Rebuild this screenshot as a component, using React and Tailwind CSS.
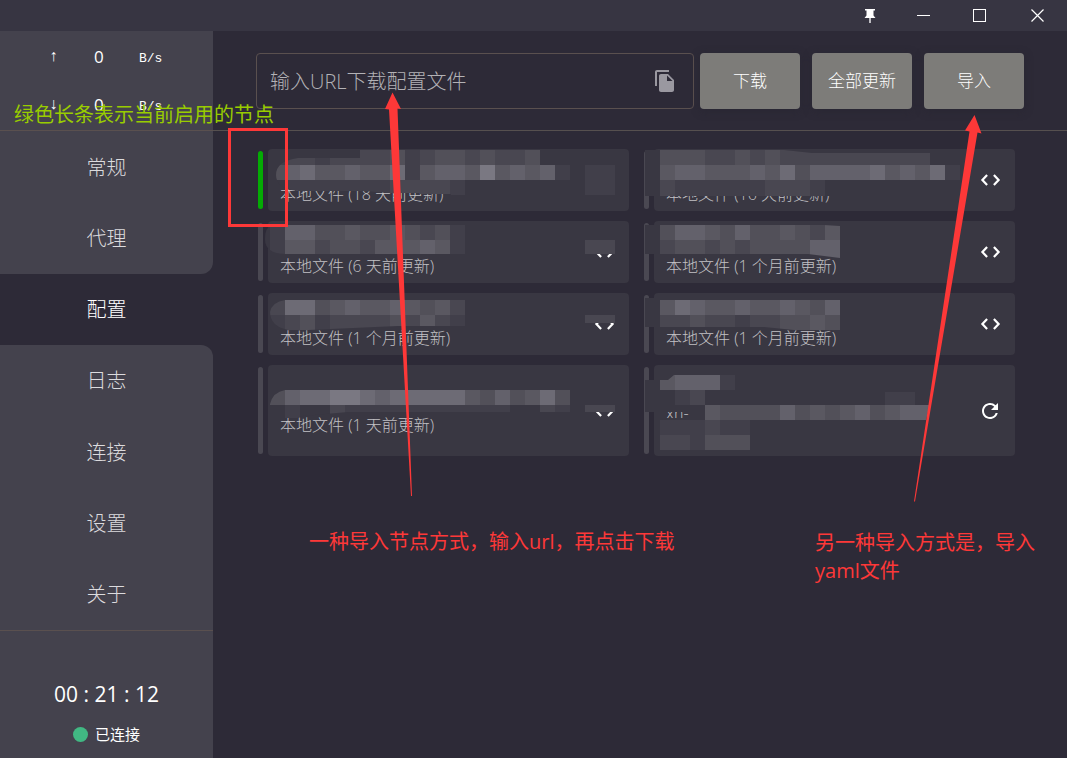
import React from "react";
import { MdFileCopy, MdRefresh } from "react-icons/md";

// Shades of the pixelated blocks, from the card colour upwards.
const SHADES = ["#393742", "#413f4a", "#494751", "#525059", "#5a5861", "#63616b", "#6d6b75", "#7a7882"];
const CELL = 15;

const NAV = ["常规", "代理", "配置", "日志", "连接", "设置", "关于"];
const ACTIVE = 2;

// Each mosaic row: [x, y, height, shade digits]
const PROFILES = [
  {
    note: "本地文件 (18 天前更新)",
    active: true,
    icon: "code",
    mosaic: [
      [2, 9, 7, "122122"],
      [92, 1, 15, "223123323223"],
      [2, 16, 15, "35644544614554745451"],
      [2, 31, 11, "011111"],
      [92, 31, 13, "11222"],
      [152, 31, 15, "221"],
      [317, 16, 30, "11"],
    ],
    clip: "M92 1H361V46H183V45H135L95 42H30Q8 40 8 26T30 9H84L90 1Z",
  },
  {
    note: "本地文件 (16 天前更新)",
    icon: "code",
    mosaic: [
      [-9, 1, 46, "0"],
      [6, 1, 15, "333223232222222222"],
      [6, 16, 15, "4554445463555564546"],
      [291, 16, 15, "1"],
      [6, 31, 16, "211111122210"],
    ],
    clip: "M-9 1H130L158 4H310V31H192V47H-9Z",
  },
  {
    note: "本地文件 (6 天前更新)",
    icon: "code",
    mosaic: [
      [-13, 4, 15, "0"],
      [2, 4, 15, "1553343343231"],
      [-13, 19, 14, "0"],
      [2, 19, 14, "1442332444541"],
      [317, 19, 14, "22"],
    ],
    clip: "M4 4H361V33H18Q-3 33 -3 18Q-3 6 4 4Z",
  },
  {
    note: "本地文件 (1 个月前更新)",
    icon: "code",
    mosaic: [
      [-9, 0, 33, "0"],
      [6, 4, 15, "355435334324"],
      [6, 19, 18, "233232333355"],
    ],
    clip: "M-9 4H170L186 5V37L154 33H-9Z",
  },
  {
    note: "本地文件 (1 个月前更新)",
    icon: "code",
    mosaic: [
      [2, 7, 15, "2663454454342"],
      [2, 22, 16, "1231222232421"],
      [317, 22, 8, "22"],
    ],
    clip: "M17 7H361V33H130L40 37H20Q2 33 2 19Q4 9 17 7Z",
  },
  {
    note: "本地文件 (1 个月前更新)",
    icon: "code",
    mosaic: [
      [-9, 1, 33, "0"],
      [6, 7, 15, "465445445435"],
      [6, 22, 15, "223221223343"],
    ],
    clip: "M-9 5H186V37H140L110 34H-9Z",
  },
  {
    note: "本地文件 (1 天前更新)",
    icon: "code",
    tall: true,
    mosaic: [
      [2, 25, 15, "35667765666664353463"],
      [2, 40, 13, "01002111111111110021"],
      [317, 40, 7, "22"],
    ],
    clip: "M17 25H361V47H80L35 51L20 56H10V47H2V39Q5 27 17 25Z",
  },
  {
    note: "xn-",
    icon: "refresh",
    tall: true,
    mosaic: [
      [-9, 15, 32, "0"],
      [6, 10, 15, "45551"],
      [6, 25, 15, "012"],
      [231, 27, 13, "11"],
      [6, 40, 7, "000"],
      [36, 40, 15, "043333534345345552"],
      [6, 53, 2, "00"],
      [6, 55, 15, "111211"],
      [6, 70, 15, "221333"],
    ],
    clip: "M20 10H283L272 55H96V85H6Q-5 81 -5 68Q-2 53 6 53H36V47H-9V15H14Z",
  },
];

function Mosaic({ rows, clip, id }) {
  return (
    <svg className="pointer-events-none absolute inset-0 h-full w-full overflow-visible" shapeRendering="crispEdges" aria-hidden="true">
      <clipPath id={id}>
        <path d={clip} />
      </clipPath>
      <g clipPath={`url(#${id})`}>
        {rows.map(([x, y, h, cells], r) =>
          cells.split("").map((c, i) => (
            <rect key={`${r}-${i}`} x={x + i * CELL} y={y} width={CELL} height={h} fill={SHADES[c]} />
          )),
        )}
      </g>
    </svg>
  );
}

function CodeIcon() {
  return (
    <svg width="24" height="24" viewBox="0 0 24 24" fill="none" stroke="currentColor" strokeWidth="2.2">
      <path d="M9.100 7 4.400 12l4.700 5M15.900 7l4.700 5-4.700 5" />
    </svg>
  );
}

function Profile({ profile, index }) {
  const { note, active, icon, tall, mosaic, clip } = profile;
  return (
    <li className="flex gap-[5px]">
      <span className={`my-[2px] w-[5px] shrink-0 rounded-full ${active ? "bg-[#04ab04]" : "bg-[#4a4852]"}`} />
      <div
        className={`relative flex min-w-0 flex-1 items-center rounded-[4px] bg-[#393742] pr-[13px] pl-3 ${tall ? "h-[91px]" : "h-[62px]"}`}
      >
        <p className={`flex-1 text-[16px] leading-6 font-light text-[#c2c1c5] ${icon === "refresh" ? "pt-1" : "pt-7"}`}>
          {note}
        </p>
        <button type="button" aria-label={icon === "code" ? "编辑" : "更新"} className="text-white">
          {icon === "code" ? <CodeIcon /> : <MdRefresh size={24} />}
        </button>
        <Mosaic rows={mosaic} clip={clip} id={`mosaic-${index}`} />
      </div>
    </li>
  );
}

function Traffic({ arrow }) {
  return (
    <div className="flex h-12 items-center font-['Liberation_Mono','Noto_Sans_CJK_SC',monospace] text-[13px] text-white">
      <span className="w-9 pl-[2px] text-[16px]">{arrow}</span>
      <span className="w-14 pl-[11px] font-['Open_Sans',sans-serif] text-[17px]">0</span>
      <span className="pt-1 font-light">B/s</span>
    </div>
  );
}

function TitleBar() {
  const button = "flex h-full items-center justify-center";
  return (
    <header className="flex h-[31px] shrink-0 justify-end bg-[#373542] text-white">
      <button type="button" aria-label="置顶" className={`${button} w-[50px]`}>
        <svg width="12" height="16" viewBox="0 0 12 16">
          <path fill="currentColor" d="M1 1h10v1.5H9.500V7.500L11.500 10H.5L2.500 7.500V2.500H1Z" />
          <path fill="#bdbcc1" d="M5 10h2v5H5z" />
        </svg>
      </button>
      <button type="button" aria-label="最小化" className={`${button} w-14`}>
        <span className="h-px w-[13px] bg-white" />
      </button>
      <button type="button" aria-label="最大化" className={`${button} w-14`}>
        <span className="h-[13px] w-[13px] border border-white" />
      </button>
      <button type="button" aria-label="关闭" className={`${button} w-[60px]`}>
        <svg width="13" height="13" viewBox="0 0 13 13" stroke="currentColor" strokeWidth="1.2">
          <path d="M.5.5l12 12M12.500.5l-12 12" />
        </svg>
      </button>
    </header>
  );
}

function Sidebar() {
  return (
    <aside className="flex w-[213px] shrink-0 flex-col">
      <div className="h-[100px] border-b border-[#5a504f] bg-[#44424d] pt-[2px] pl-[47px]">
        <Traffic arrow="↑" />
        <Traffic arrow="↓" />
      </div>
      <nav className="flex flex-1 flex-col">
        {NAV.map((label, i) => {
          let look = "bg-[#44424d] text-[#dcdbde]";
          if (i === ACTIVE) look = "bg-[#2d2a37] text-white";
          if (i === ACTIVE - 1) look += " rounded-br-[12px]";
          if (i === ACTIVE + 1) look += " rounded-tr-[12px]";
          return (
            <a key={label} href="#" className={`flex flex-1 items-center justify-center pt-[2px] text-[20px] font-light ${look}`}>
              {label}
            </a>
          );
        })}
      </nav>
      <div className="flex h-[128px] flex-col items-center border-t border-[#5a504f] bg-[#44424d] pt-[49px] text-white">
        <time className="text-[21px] leading-7">00 : 21 : 12</time>
        <p className="mt-3 flex items-center gap-[7px] text-[15px] leading-7">
          <span className="h-[15px] w-[15px] rounded-full bg-[#41b883]" />
          已连接
        </p>
      </div>
    </aside>
  );
}

function ActionButton({ children }) {
  return (
    <button
      type="button"
      className="h-14 w-[100px] shrink-0 rounded-[4px] bg-[#7d7c79] text-[17px] font-light text-white shadow-[0_2px_10px_rgba(36,34,46,0.4)]"
    >
      {children}
    </button>
  );
}

function Annotations() {
  return (
    <div className="pointer-events-none absolute inset-0 overflow-hidden text-[20px] leading-7 text-[#fd3838]">
      <p className="absolute top-[101px] left-[14px] whitespace-nowrap text-[#99cc00]">绿色长条表示当前启用的节点</p>
      <div className="absolute top-[128px] left-[228px] h-[99px] w-[60px] border-3 border-[#fd3838]" />
      <p className="absolute top-[528px] left-[309px] whitespace-nowrap">一种导入节点方式，输入url，再点击下载</p>
      <p className="absolute top-[529px] left-[815px] whitespace-nowrap">
        另一种导入方式是，导入
        <br />
        yaml文件
      </p>
      <svg className="absolute top-0 left-0" width="1067" height="758" fill="#fd3838" aria-hidden="true">
        <path d="M392.500 92.500 401 109 397.500 108.500 412 496H411L389 109.500 385 109Z" />
        <path d="M974.500 115 981.500 133.500 977.500 132.500 915 501.500H914L969.500 131.500 965 130.500Z" />
      </svg>
    </div>
  );
}

export default function App() {
  return (
    <div className="relative flex min-h-screen flex-col bg-[#2d2a37] font-['Open_Sans','Noto_Sans_CJK_SC',sans-serif]">
      <TitleBar />
      <div className="flex flex-1">
        <Sidebar />
        <main className="min-w-0 flex-1">
          <form className="flex gap-3 border-b border-[#56504f] px-[43px] pt-[22px] pb-[21px]" onSubmit={(e) => e.preventDefault()}>
            <div className="mr-[-6px] flex h-14 min-w-0 flex-1 items-center rounded-[4px] border border-[#5a504f] pr-4 pl-[13px]">
              <input
                type="text"
                aria-label="配置文件地址"
                placeholder="输入URL下载配置文件"
                className="h-full min-w-0 flex-1 bg-transparent text-[20px] font-light text-white outline-none placeholder:text-[#b3b2b6]"
              />
              <button type="button" aria-label="粘贴" className="text-[#9a98a0]">
                <MdFileCopy size={24} />
              </button>
            </div>
            <ActionButton>下载</ActionButton>
            <ActionButton>全部更新</ActionButton>
            <ActionButton>导入</ActionButton>
          </form>
          <ul className="grid grid-cols-2 gap-x-[15px] gap-y-[10px] pt-[18px] pr-[52px] pb-6 pl-[45px]">
            {PROFILES.map((profile, i) => (
              <Profile key={i} profile={profile} index={i} />
            ))}
          </ul>
        </main>
      </div>
      <Annotations />
    </div>
  );
}
